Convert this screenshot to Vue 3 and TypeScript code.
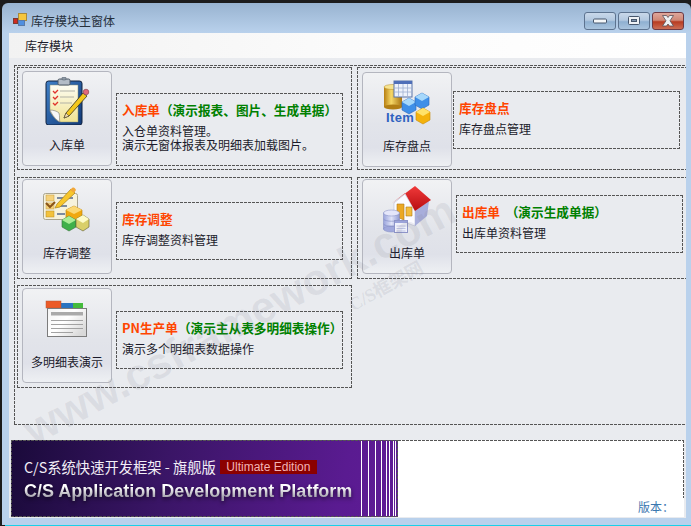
<template>
  <div class="desk">
    <div class="win">
      <div class="titlebar">
        <svg class="app-icon" width="14" height="14" viewBox="0 0 14 14">
          <rect x="0.5" y="5.5" width="4" height="5" fill="#d02a20" stroke="#7d3a30" />
          <rect x="5.5" y="0.5" width="8" height="7" fill="#f6c63c" stroke="#a98a3a" />
          <rect x="5.5" y="7.5" width="6" height="5" fill="#4f8fe0" stroke="#5a7ba8" />
        </svg>
        <span class="win-title">库存模块主窗体</span>
        <div class="caps">
          <div class="cap">
            <svg width="14" height="6" viewBox="0 0 14 6"><rect x="0.5" y="1" width="13" height="4" rx="1" fill="#f4f6f8" stroke="#46566c" /></svg>
          </div>
          <div class="cap">
            <svg width="14" height="10" viewBox="0 0 14 10"><rect x="1.5" y="0.5" width="11" height="8" rx="1" fill="#eef1f5" stroke="#46566c" /><rect x="4.5" y="3.5" width="5" height="2" fill="#7f94ad" stroke="#46566c" /></svg>
          </div>
          <div class="cap cap-close">
            <svg width="16" height="12" viewBox="0 0 16 12"><path d="M2.500 0.500h4L8 2.500 9.500 0.500h4L10 5.800 13.500 11h-4L8 9 6.500 11h-4L6 5.800z" fill="#eef0f3" stroke="#5a5058" stroke-width="0.8" /></svg>
          </div>
        </div>
      </div>

      <div class="client">
        <div class="menubar"><span>库存模块</span></div>

        <div class="panel dash">
          <div v-for="(row, r) in rows" :key="r" class="row" :style="{ marginTop: row.gap + 'px' }">
            <div v-for="item in row.items" :key="item.label" class="cell dash" :style="{ height: row.height + 'px' }">
              <div class="btn" :style="{ marginTop: item.btnTop + 'px' }">
                <div class="btn-icon">
                  <svg v-if="item.icon === 'clip'" width="48" height="48" viewBox="0 0 48 48">
                    <defs>
                      <linearGradient id="boardG" x1="0" y1="0" x2="1" y2="1"><stop offset="0" stop-color="#3f80c8" /><stop offset="1" stop-color="#123a78" /></linearGradient>
                      <linearGradient id="paperG" x1="0" y1="0" x2="0" y2="1"><stop offset="0" stop-color="#fdfdf4" /><stop offset="1" stop-color="#f1e391" /></linearGradient>
                    </defs>
                    <rect x="3" y="4" width="36" height="44" rx="2.500" fill="url(#boardG)" stroke="#10223f" />
                    <path d="M7 8h28v37H17c-3-1-7-5-10-11z" fill="url(#paperG)" stroke="#8f9070" stroke-width="0.5" />
                    <path d="M7 33c3 0 7 1 9 3 1 3 0 7 1 9-4-2-8-7-10-12z" fill="#f8f8f8" stroke="#777" stroke-width="0.6" />
                    <rect x="15" y="2" width="12" height="6" rx="1.500" fill="#b3bcc6" stroke="#4c5866" />
                    <rect x="19" y="0" width="4" height="3" rx="1" fill="#8f99a5" stroke="#4c5866" stroke-width="0.5" />
                    <path d="M10 14l2 2 3-3M10 20l2 2 3-3M10 26l2 2 3-3" fill="none" stroke="#e0342c" stroke-width="1.300" />
                    <path d="M17 14h15M17 20h14M17 26h12" stroke="#b2b2a6" stroke-width="1" />
                    <path d="M23 36l17-20 4 3-18 20-5 2z" fill="#f3c81c" stroke="#3a3420" stroke-width="0.8" />
                    <path d="M23 36l3 3-5 2z" fill="#f2dcb0" stroke="#3a3420" stroke-width="0.5" />
                    <circle cx="43" cy="15" r="2.800" fill="#e2687a" stroke="#7a3a44" stroke-width="0.6" />
                  </svg>

                  <svg v-else-if="item.icon === 'item'" width="48" height="48" viewBox="0 0 48 48">
                    <defs>
                      <linearGradient id="cylG" x1="0" y1="0" x2="1" y2="0"><stop offset="0" stop-color="#b77f12" /><stop offset="0.4" stop-color="#f6d766" /><stop offset="1" stop-color="#a87310" /></linearGradient>
                    </defs>
                    <rect x="1" y="9" width="18" height="20" fill="url(#cylG)" />
                    <ellipse cx="10" cy="29" rx="9" ry="2.500" fill="#b27e14" />
                    <ellipse cx="10" cy="9" rx="9" ry="2.500" fill="#f7e490" stroke="#b58a2a" stroke-width="0.5" />
                    <rect x="11" y="3" width="18" height="16" fill="#eef2fa" stroke="#5a74a8" />
                    <rect x="11" y="3" width="18" height="3" fill="#4f6fb8" />
                    <path d="M11 10h18M11 14h18M15.500 6v13M20 6v13M24.500 6v13" stroke="#9fb0d0" stroke-width="0.8" />
                    <path d="M26 20l7 4v8l-7 4-7-4v-8z" fill="#3f8fe8" stroke="#2d68b8" stroke-width="0.6" />
                    <path d="M26 20l7 4-7 4-7-4z" fill="#a6d8fb" />
                    <path d="M39 15l7 4v8l-7 4-7-4v-8z" fill="#3f8fe8" stroke="#2d68b8" stroke-width="0.6" />
                    <path d="M39 15l7 4-7 4-7-4z" fill="#a6d8fb" />
                    <path d="M40 30l7 4v8l-7 4-7-4v-8z" fill="#f4b20c" stroke="#c78a06" stroke-width="0.6" />
                    <path d="M40 30l7 4-7 4-7-4z" fill="#ffe26a" />
                    <text x="3" y="44" class="item-text">Item</text>
                  </svg>

                  <svg v-else-if="item.icon === 'check'" width="48" height="48" viewBox="0 0 48 48">
                    <rect x="0.500" y="8.500" width="34" height="26" rx="2" fill="#f6f2dc" stroke="#a9a48e" />
                    <rect x="3" y="10" width="8" height="6" fill="#f6d27a" stroke="#c29b40" stroke-width="0.5" />
                    <rect x="3" y="18" width="8" height="6" fill="#f6d27a" stroke="#c29b40" stroke-width="0.5" />
                    <rect x="3" y="26" width="8" height="6" fill="#f3c23c" stroke="#b98a20" stroke-width="0.5" />
                    <path d="M3 18l4 4 5-5" fill="none" stroke="#8a5418" stroke-width="2" />
                    <path d="M14 13h16M14 21h10M14 29h8" stroke="#54688c" stroke-width="1.600" />
                    <path d="M14 19l14-15 4 4-15 14-5 1z" fill="#f7c62c" stroke="#a77f18" stroke-width="0.7" />
                    <path d="M27 5l2-2c2-1 3 0 4 2l-2 3z" fill="#f1a83a" />
                    <path d="M31 21l8 4v8l-8 4-8-4v-8z" fill="#f0a810" stroke="#b47c08" stroke-width="0.6" />
                    <path d="M31 21l8 4-8 4-8-4z" fill="#fbd874" />
                    <path d="M26 31l7 4v7l-7 4-7-4v-7z" fill="#3fb04a" stroke="#38703c" stroke-width="0.6" />
                    <path d="M26 31l7 4-7 4-7-4z" fill="#a9ec94" />
                    <path d="M40 30l6 4v8l-6 4-7-4v-8z" fill="#d9cf6a" stroke="#5f5c34" stroke-width="0.6" />
                    <path d="M40 30l6 4-6 4-7-4z" fill="#fdfbc8" />
                  </svg>

                  <svg v-else-if="item.icon === 'house'" width="48" height="48" viewBox="0 0 48 48">
                    <defs>
                      <linearGradient id="roofG" x1="0" y1="0" x2="0" y2="1"><stop offset="0" stop-color="#f03a3a" /><stop offset="1" stop-color="#b80c10" /></linearGradient>
                      <linearGradient id="dbG" x1="0" y1="0" x2="1" y2="0"><stop offset="0" stop-color="#9aa4dc" /><stop offset="0.5" stop-color="#dfe3f8" /><stop offset="1" stop-color="#8f99d2" /></linearGradient>
                    </defs>
                    <path d="M11 18l11-9 10 17v15l-21-8z" fill="#fbfbff" stroke="#aeb2cc" stroke-width="0.5" />
                    <path d="M32 26l14-10-2 15-12 10z" fill="#a8aedb" />
                    <path d="M14 19h7v16l-7-3z" fill="#eba824" stroke="#b07818" stroke-width="0.6" />
                    <path d="M23 22h6v9h-6z" fill="#f4bd3c" stroke="#b07818" stroke-width="0.6" />
                    <path d="M8 19L32 1l16 14-16 11-10-18z" fill="url(#roofG)" />
                    <rect x="0.500" y="28" width="16" height="16" fill="url(#dbG)" stroke="#7f88c0" stroke-width="0.5" />
                    <ellipse cx="8.500" cy="44" rx="8" ry="3" fill="#a0a8dc" stroke="#7f88c0" stroke-width="0.5" />
                    <path d="M0.500 34c2 3 14 3 16 0M0.500 39c2 3 14 3 16 0" fill="none" stroke="#7f88c0" stroke-width="0.6" />
                    <ellipse cx="8.500" cy="28" rx="8" ry="3" fill="#e4e6fa" stroke="#7f88c0" stroke-width="0.5" />
                    <rect x="11.500" y="35.500" width="13" height="12" fill="#f0f2fc" stroke="#8d94c8" />
                    <rect x="12" y="36" width="12" height="2" fill="#9ca4da" />
                    <path d="M13.500 41h9M13.500 43.500h9M13.500 46h9" stroke="#b3b9e0" stroke-width="0.8" />
                  </svg>

                  <svg v-else width="48" height="48" viewBox="0 0 48 48">
                    <defs>
                      <linearGradient id="tabWinG" x1="0" y1="0" x2="1" y2="0.700"><stop offset="0" stop-color="#f4f4f4" /><stop offset="0.5" stop-color="#ffffff" /><stop offset="1" stop-color="#d9d9d9" /></linearGradient>
                    </defs>
                    <rect x="18" y="9" width="12" height="5" fill="#2a74c0" />
                    <rect x="30" y="9" width="10" height="5" fill="#44bb3c" />
                    <rect x="3" y="7" width="15" height="7" fill="#ec5a26" stroke="#b25a38" stroke-width="0.5" />
                    <rect x="4.500" y="14.500" width="39" height="28" fill="url(#tabWinG)" stroke="#7c7c7c" />
                    <rect x="8" y="18" width="32" height="3.500" fill="#aaaaaa" />
                    <path d="M8 26.500h32M8 30.500h32M8 34.500h32M8 38.500h22" stroke="#a2a2a2" stroke-width="1" />
                  </svg>
                </div>
                <span class="btn-label">{{ item.label }}</span>
              </div>
              <div
                class="desc dash"
                :style="{ marginTop: item.boxTop + 'px', marginLeft: item.boxGap + 'px', height: item.boxHeight + 'px' }"
              >
                <div class="desc-title">
                  <b class="hot">{{ item.title }}</b><b class="note">{{ item.note }}</b>
                </div>
                <div v-for="line in item.lines" :key="line" class="desc-line">{{ line }}</div>
              </div>
            </div>
          </div>
        </div>

        <div class="footer">
          <div class="banner">
            <div class="banner-text">
              <div class="banner-top">
                <span class="banner-cn">C/S系统快速开发框架 - 旗舰版</span>
                <span class="edition">Ultimate Edition</span>
              </div>
              <div class="banner-en">C/S Application Development Platform</div>
            </div>
            <div class="stripes"></div>
          </div>
          <div class="version-box"><span class="version">版本：</span></div>
        </div>

        <div class="watermark">www.csframework.com</div>
        <div class="watermark-cn">C/S框架网</div>
      </div>
    </div>
    <div class="taskline"></div>
  </div>
</template>

<script setup lang="ts">
interface Item {
  icon: string;
  label: string;
  title: string;
  note: string;
  lines: string[];
  btnTop: number;
  boxTop: number;
  boxGap: number;
  boxHeight: number;
}

interface Row {
  gap: number;
  height: number;
  items: Item[];
}

// 每个模块按钮及其说明，偏移量都相对所在单元格
const rows: Row[] = [
  {
    gap: 2,
    height: 103,
    items: [
      {
        icon: 'clip',
        label: '入库单',
        title: '入库单',
        note: '（演示报表、图片、生成单据）',
        lines: ['入仓单资料管理。', '演示无窗体报表及明细表加载图片。'],
        btnTop: 4,
        boxTop: 26,
        boxGap: 4,
        boxHeight: 73,
      },
      {
        icon: 'item',
        label: '库存盘点',
        title: '库存盘点',
        note: '',
        lines: ['库存盘点管理'],
        btnTop: 5,
        boxTop: 24,
        boxGap: 1,
        boxHeight: 58,
      },
    ],
  },
  {
    gap: 7,
    height: 102,
    items: [
      {
        icon: 'check',
        label: '库存调整',
        title: '库存调整',
        note: '',
        lines: ['库存调整资料管理'],
        btnTop: 2,
        boxTop: 25,
        boxGap: 4,
        boxHeight: 58,
      },
      {
        icon: 'house',
        label: '出库单',
        title: '出库单',
        note: '  （演示生成单据）',
        lines: ['出库单资料管理'],
        btnTop: 2,
        boxTop: 18,
        boxGap: 4,
        boxHeight: 58,
      },
    ],
  },
  {
    gap: 6,
    height: 103,
    items: [
      {
        icon: 'tabs',
        label: '多明细表演示',
        title: 'PN生产单',
        note: '（演示主从表多明细表操作）',
        lines: ['演示多个明细表数据操作'],
        btnTop: 3,
        boxTop: 26,
        boxGap: 4,
        boxHeight: 58,
      },
    ],
  },
];
</script>

<style>
html,
body {
  margin: 0;
  background: #1c1c1c;
}
</style>

<style scoped>
.desk {
  --dash-x: repeating-linear-gradient(90deg, #555 0 3px, transparent 3px 4px);
  --dash-y: repeating-linear-gradient(180deg, #555 0 3px, transparent 3px 4px);
  width: 691px;
  height: 526px;
  padding-top: 3px;
  box-sizing: border-box;
  display: flex;
  flex-direction: column;
  overflow: hidden;
  background: #1c1c1c;
  font-family: "Noto Sans CJK SC", "Liberation Sans", sans-serif;
  font-size: 12px;
  color: #1b1b2b;
}

.win {
  flex: 1;
  min-height: 0;
  margin-left: 2px;
  display: flex;
  flex-direction: column;
  padding: 0 5px 7px 7px;
  border-radius: 6px 6px 0 0;
  background: linear-gradient(180deg, #98b3d0 0, #b9d1ec 30px, #b9d1ec 100%);
}

.taskline {
  height: 1px;
  margin-left: 5px;
  background: #1ad0e8;
}

.titlebar {
  height: 30px;
  flex: none;
  display: flex;
  align-items: center;
  padding-left: 4px;
}

.app-icon {
  margin-top: 3px;
}

.win-title {
  margin-left: 4px;
  margin-top: 6px;
  line-height: 16px;
  color: #26303c;
}

.caps {
  margin-left: auto;
  margin-right: 2px;
  margin-top: 5px;
  display: flex;
  gap: 2px;
}

.cap {
  width: 32px;
  height: 18px;
  box-sizing: border-box;
  border: 1px solid #5d738f;
  border-radius: 3px;
  display: flex;
  align-items: center;
  justify-content: center;
  background: linear-gradient(180deg, #c9d8ea 0, #b3c8df 45%, #8fb0d1 55%, #aac4de 100%);
}

.cap-close {
  border-color: #6e3a44;
  background: linear-gradient(180deg, #dfa79b 0, #d08876 45%, #b83c22 55%, #cb6d55 100%);
}

.client {
  flex: 1;
  min-height: 0;
  position: relative;
  overflow: hidden;
  background: #e9ebef;
}

.menubar {
  height: 25px;
  display: flex;
  align-items: center;
  padding-left: 16px;
  background: linear-gradient(90deg, #f2f2f2, #fbfbfb 50%, #ffffff);
}

.dash {
  background-image: var(--dash-x), var(--dash-x), var(--dash-y), var(--dash-y);
  background-size: 100% 1px, 100% 1px, 1px 100%, 1px 100%;
  background-position: top, bottom, left, right;
  background-repeat: no-repeat;
}

.panel {
  width: 700px;
  height: 360px;
  margin: 7px 0 0 5px;
  box-sizing: border-box;
  padding-left: 3px;
  display: flex;
  flex-direction: column;
}

.row {
  display: flex;
  gap: 5px;
}

.cell {
  width: 335px;
  box-sizing: border-box;
  padding: 0 0 0 5px;
  display: flex;
  align-items: flex-start;
  flex: none;
}

.cell + .cell {
  width: 345px;
}

.btn {
  width: 90px;
  height: 95px;
  flex: none;
  box-sizing: border-box;
  border: 1px solid #b4b6bf;
  border-radius: 4px;
  padding-top: 5px;
  display: flex;
  flex-direction: column;
  align-items: center;
  background: linear-gradient(180deg, #f1f2f4 0, #e2e4ea 55%, #dfe1e9 80%, #eef0f3 100%);
}

.btn-icon {
  width: 48px;
  height: 48px;
}

.btn-icon svg {
  display: block;
}

.item-text {
  font-family: "Liberation Sans", sans-serif;
  font-weight: 700;
  font-size: 13px;
  letter-spacing: 0.4px;
  fill: #2f62c0;
}

.btn-label {
  margin-top: 12px;
  line-height: 16px;
  white-space: nowrap;
}

.desc {
  width: 227px;
  flex: none;
  box-sizing: border-box;
  padding: 10px 0 0 6px;
}

.desc-title {
  height: 14px;
  line-height: 14px;
  margin-bottom: 7px;
  font-size: 12.67px;
  white-space: pre;
}

.hot {
  color: #ff4500;
}

.note {
  color: #008000;
}

.desc-line {
  line-height: 14px;
  white-space: nowrap;
}

.footer {
  display: flex;
  height: 77px;
  margin: 15px 0 0 2px;
  position: relative;
  z-index: 1;
}

.banner {
  width: 387px;
  flex: none;
  box-sizing: border-box;
  display: flex;
  background-image: var(--dash-x), var(--dash-x), var(--dash-y), var(--dash-y),
    linear-gradient(100deg, #1a0a3a 0, #3a1566 40%, #5a1b91 85%, #5f1c96 100%);
  background-size: 100% 1px, 100% 1px, 1px 100%, 1px 100%, 100% 100%;
  background-position: top, bottom, left, right, 0 0;
  background-repeat: no-repeat;
}

.banner-text {
  flex: 1;
  padding: 19px 0 0 13px;
  min-width: 0;
}

.banner-top {
  display: flex;
  align-items: center;
  height: 16px;
}

.banner-cn {
  font-size: 14.300px;
  line-height: 16px;
  color: #f2eef6;
  white-space: nowrap;
}

.edition {
  margin-left: 4px;
  width: 97px;
  height: 14px;
  line-height: 14px;
  text-align: center;
  background: #8b0000;
  color: #f4b4b4;
  font-family: "Liberation Sans", sans-serif;
  font-size: 12px;
}

.banner-en {
  margin-top: 6px;
  font-family: "Liberation Sans", sans-serif;
  font-weight: 700;
  font-size: 18px;
  line-height: 20px;
  white-space: nowrap;
  color: transparent;
  background: linear-gradient(180deg, #ffffff 30%, #9d9aa6 85%);
  background-clip: text;
  -webkit-background-clip: text;
  filter: drop-shadow(0 2px 2px rgba(0, 0, 0, 0.6));
}

.stripes {
  width: 38px;
  flex: none;
  background: linear-gradient(
    90deg,
    transparent 0 1px,
    #fff 1px 2px,
    transparent 2px 8px,
    #fff 8px 9px,
    transparent 9px 15px,
    #fff 15px 16px,
    transparent 16px 21px,
    #fff 21px 22px,
    transparent 22px 26px,
    #fff 26px 27px,
    transparent 27px 29px,
    #fff 29px 30px,
    transparent 30px 33px,
    #fff 33px 34px,
    transparent 34px 35px,
    #fff 35px 36px,
    transparent 36px
  );
  margin: 1px 0;
}

.version-box {
  width: 286px;
  flex: none;
  box-sizing: border-box;
  display: flex;
  align-items: flex-end;
  justify-content: flex-end;
  padding: 0 10px 2px 0;
  background-color: #fff;
  background-image: var(--dash-x), var(--dash-y);
  background-size: 100% 1px, 1px 58px;
  background-position: top, right top;
  background-repeat: no-repeat;
}

.version {
  line-height: 16px;
  color: #3b78b0;
}

.watermark {
  position: absolute;
  left: 29px;
  top: 373px;
  transform: rotate(-28deg);
  transform-origin: left bottom;
  font-family: "Liberation Sans", sans-serif;
  font-weight: 700;
  font-size: 43.500px;
  line-height: 48px;
  white-space: nowrap;
  color: rgba(120, 122, 135, 0.13);
  pointer-events: none;
}

.watermark-cn {
  position: absolute;
  left: 346px;
  top: 262px;
  transform: rotate(-29deg);
  transform-origin: left bottom;
  font-family: "Liberation Serif", "Noto Sans CJK SC", serif;
  font-weight: 700;
  font-size: 18px;
  line-height: 20px;
  white-space: nowrap;
  color: rgba(120, 122, 135, 0.14);
  pointer-events: none;
}
</style>
